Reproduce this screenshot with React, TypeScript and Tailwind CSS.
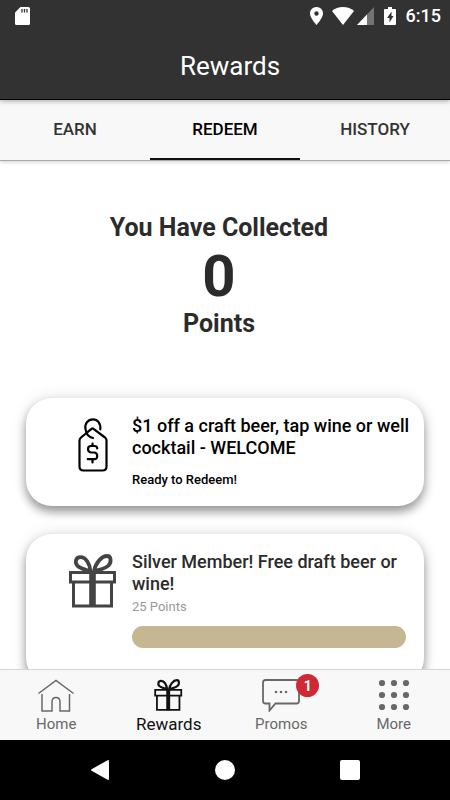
// App.tsx
import { useState } from "react";
import type { ReactNode } from "react";
import clsx from "clsx";

const TABS = ["EARN", "REDEEM", "HISTORY"] as const;

function GiftIcon({ className }: { className?: string }) {
  return (
    <svg viewBox="0 0 48 54" fill="none" stroke="currentColor" strokeWidth="3" className={className} aria-hidden="true">
      <path d="M1.5 18.5H45.5V28H1.5Z" />
      <path d="M4.5 28V52H42.5V28" />
      <path d="M23.5 17V53" strokeWidth="6.6" />
      <path d="M21.5 17.5C21 10 17 3.2 11.5 3.2C6.5 3.2 5.5 8.5 8.5 11.8C12 15 17 15.5 21.5 17.5" strokeWidth="3.8" />
      <path d="M25 17.5C26 10 32 2 38 2C42.5 2 42.5 8.5 39.5 11.5C36 15 30 15.5 25 17.5" strokeWidth="3.8" />
    </svg>
  );
}

function TagIcon({ className }: { className?: string }) {
  return (
    <svg viewBox="0 0 30 54" fill="none" stroke="currentColor" strokeWidth="2.2" strokeLinecap="round" strokeLinejoin="round" className={className} aria-hidden="true">
      <path d="M13.5 10.8Q14.5 10 15.500 10.800L27 19.500Q28.500 20.800 28.500 22.500V48.500Q28.500 52.500 24.500 52.500H5.500Q1.500 52.500 1.500 48.500V22.500Q1.500 20.800 3 19.500Z" />
      <path d="M22.300 11.300C23 5.500 19.500 1.300 15 1.300C9.500 1.300 6.500 6 7.500 11C8 16 10.500 19 15 20" />
      <path d="M14.500 25.500V28M14.500 41.500V44.500M19.200 30.500Q19.200 28 16.500 28H13Q10 28 10 31T13 34.500H16Q19.200 34.500 19.200 38T16 41.200H9.800" />
    </svg>
  );
}

function HomeIcon() {
  return (
    <svg viewBox="0 0 38 34" className="h-[34px] w-[38px]" fill="none" stroke="currentColor" strokeWidth="1.5" aria-hidden="true">
      <path d="M1.5 15.5L19 2.5L36.5 15.5" />
      <path d="M5 16V33H15V24Q15 19.500 19 19.500T23 24V33H32.500V16" />
    </svg>
  );
}

function PromosIcon() {
  return (
    <svg viewBox="0 0 38 34" className="h-[34px] w-[38px]" fill="none" stroke="currentColor" strokeWidth="1.8" aria-hidden="true">
      <path d="M3.500 2H34.500Q37 2 37 4.500V23Q37 25.500 34.500 25.500H13.500L7.500 32.500V25.500H3.500Q1 25.500 1 23V4.500Q1 2 3.500 2Z" />
      <g fill="currentColor" stroke="none">
        <circle cx="14" cy="14" r="1.300" />
        <circle cx="19" cy="14" r="1.300" />
        <circle cx="24" cy="14" r="1.300" />
      </g>
    </svg>
  );
}

function MoreIcon() {
  return (
    <svg viewBox="0 0 32 32" className="size-8" fill="currentColor" aria-hidden="true">
      {[4, 16, 28].map(cy => [4, 16, 28].map(cx => <circle key={cx + "-" + cy} cx={cx} cy={cy} r="3.1" />))}
    </svg>
  );
}

function StatusBar() {
  return (
    <div className="flex h-8 shrink-0 items-center justify-between pr-[9px] pl-[15px]">
      <svg viewBox="0 0 15 18" className="h-[18px] w-[15px]" aria-hidden="true">
        <path fill="white" d="M5.5 0H13.5Q15 0 15 1.5V16.5Q15 18 13.5 18H1.5Q0 18 0 16.5V5.5Z" />
        <path stroke="#333" strokeWidth="1.3" d="M7 2V5.5M9.5 2V5.5M12 2V5.5" />
      </svg>
      <div className="flex items-center">
        <svg viewBox="0 0 13 18" className="mr-[9px] h-[18px] w-[13px]" aria-hidden="true">
          <path fill="white" fillRule="evenodd" d="M6.500 0A6.400 6.400 0 0 0 0 6.500C0 11 6.500 18 6.500 18S13 11 13 6.500A6.400 6.400 0 0 0 6.500 0ZM6.500 4.300A2.200 2.200 0 1 1 6.500 8.700A2.200 2.200 0 1 1 6.500 4.300Z" />
        </svg>
        <svg viewBox="0 0 22 18" className="mr-[3px] h-[18px] w-[22px]" aria-hidden="true">
          <path fill="white" d="M11 18L0 4Q4.500 0 11 0T22 4Z" />
        </svg>
        <svg viewBox="0 0 17 18" className="mr-[10px] h-[18px] w-[17px]" aria-hidden="true">
          <path fill="#747474" d="M17 0V18H0Z" />
          <path fill="white" d="M10 7.500V18H0Z" />
        </svg>
        <svg viewBox="0 0 12 18" className="mr-[10px] h-[18px] w-[12px]" aria-hidden="true">
          <path fill="white" d="M4 0H8V2H11Q12 2 12 3V17Q12 18 11 18H1Q0 18 0 17V3Q0 2 1 2H4Z" />
          <path fill="#333" d="M7.500 4.500L3 11H5.500V15.500L9.500 9H7.500Z" />
        </svg>
        <span className="text-lg leading-5 font-medium">6:15</span>
      </div>
    </div>
  );
}

function RewardCard({ icon, title, children, className }: { icon: ReactNode; title: string; children: ReactNode; className?: string }) {
  return (
    <article className={clsx("flex shrink-0 rounded-[26px] bg-white pr-3 shadow-[0_6px_10px_rgba(0,0,0,0.36),0_0_16px_rgba(0,0,0,0.12)]", className)}>
      <div className="flex w-[106px] shrink-0 justify-end pt-5">{icon}</div>
      <div className="min-w-0 flex-1 pt-[17px]">
        <h2 className="text-lg leading-[22px] font-medium">{title}</h2>
        {children}
      </div>
    </article>
  );
}

function NavItem({ icon, label, active }: { icon: ReactNode; label: string; active?: boolean }) {
  return (
    <a
      href="#"
      aria-current={active ? "page" : undefined}
      className={clsx("flex flex-1 flex-col items-center pt-[7px]", active ? "text-[#111]" : "text-[#686868]")}
    >
      <span className="relative flex h-9 items-center justify-center">{icon}</span>
      <span className={clsx("leading-[22px]", active ? "text-[17px]" : "text-[15px]")}>{label}</span>
    </a>
  );
}

export default function App() {
  const [tab, setTab] = useState<string>("REDEEM");

  return (
    <div className="flex h-screen flex-col overflow-hidden bg-white font-[Roboto,sans-serif] text-[#2b2b2b]">
      <header className="relative z-10 flex h-[100px] shrink-0 flex-col border-b border-black bg-[#323232] text-white shadow-[0_1px_5px_rgba(0,0,0,0.35)]">
        <StatusBar />
        <h1 className="pt-[18px] pl-[10px] text-center text-[26px] leading-8">Rewards</h1>
      </header>

      <div role="tablist" className="flex h-[61px] shrink-0 border-b border-[#aaa] bg-[#f8f8f8] shadow-[0_1px_4px_rgba(0,0,0,0.2)]">
        {TABS.map(t => (
          <button
            key={t}
            role="tab"
            aria-selected={tab === t}
            onClick={() => setTab(t)}
            className={clsx("flex-1 border-b-2 pt-px text-[17px] font-medium", tab === t ? "border-[#111] text-black" : "border-transparent text-[#333]")}
          >
            {t}
          </button>
        ))}
      </div>

      <main className="flex min-h-0 flex-1 flex-col overflow-hidden">
        <section className="shrink-0 pt-[51px] pr-3 text-center font-bold">
          <p className="text-[25px] leading-8">You Have Collected</p>
          <p className="text-[58px] leading-[64px]">0</p>
          <p className="text-[25px] leading-8">Points</p>
        </section>

        <section className="mt-[58px] flex flex-col gap-7 px-[26px]">
          <RewardCard className="min-h-[108px] text-black" icon={<TagIcon className="mr-6 h-[54px] w-[30px]" />} title="$1 off a craft beer, tap wine or well cocktail - WELCOME">
            <p className="pt-[11px] text-[13px] leading-5 font-medium">Ready to Redeem!</p>
          </RewardCard>
          <RewardCard className="min-h-[150px]" icon={<GiftIcon className="mr-[15px] h-[54px] w-12 text-[#444]" />} title="Silver Member! Free draft beer or wine!">
            <p className="text-[13px] leading-6 text-[#999]">25 Points</p>
            <div role="progressbar" aria-valuenow={0} aria-valuemax={25} aria-label="Points collected" className="mt-[7px] mr-[6px] h-[22px] rounded-full bg-[#c5b792]" />
          </RewardCard>
        </section>
      </main>

      <nav className="relative z-10 flex h-[71px] shrink-0 border-t border-[#d5d5d5] bg-[#f8f8f8]">
        <NavItem icon={<HomeIcon />} label="Home" />
        <NavItem icon={<GiftIcon className="h-8 w-[29px]" />} label="Rewards" active />
        <NavItem
          icon={
            <>
              <PromosIcon />
              <span className="absolute -top-[3px] -right-[19px] flex size-[23px] items-center justify-center rounded-full bg-[#cf2936] text-sm font-bold text-white">1</span>
            </>
          }
          label="Promos"
        />
        <NavItem icon={<MoreIcon />} label="More" />
      </nav>

      <footer className="flex h-[60px] shrink-0 items-center bg-black px-[37px] text-white">
        <button aria-label="Back" className="flex flex-1 justify-center">
          <svg viewBox="0 0 18 20" className="h-5 w-[18px]" fill="currentColor" aria-hidden="true">
            <path d="M17 0Q18 0 18 1V19Q18 20 17 20L1 11Q-1 10 1 9Z" />
          </svg>
        </button>
        <button aria-label="Home screen" className="flex flex-1 justify-center">
          <span className="size-5 rounded-full bg-white" />
        </button>
        <button aria-label="Recent apps" className="flex flex-1 justify-center">
          <span className="size-5 rounded-xs bg-white" />
        </button>
      </footer>
    </div>
  );
}
